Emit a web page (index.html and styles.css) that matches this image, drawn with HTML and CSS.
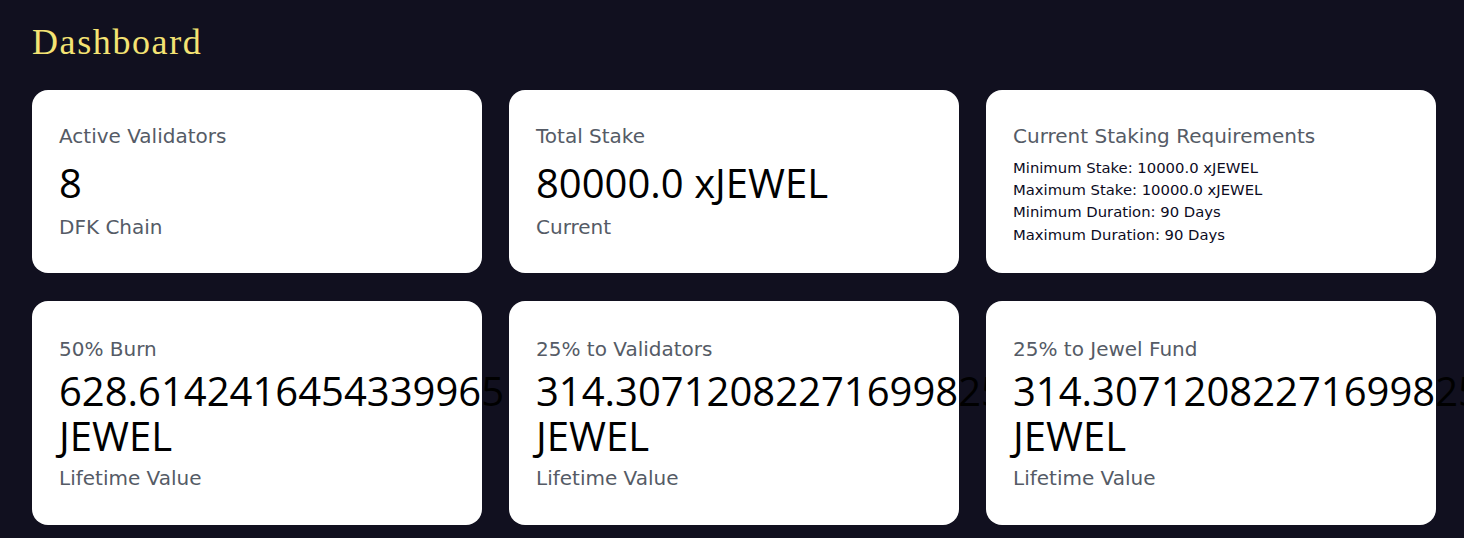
FILE: index.html
```html
<!DOCTYPE html>
<html lang="en">
<head>
<meta charset="utf-8">
<title>Dashboard</title>
<link rel="stylesheet" href="styles.css">
</head>
<body>
<main class="page">
  <h1 class="page-title">Dashboard</h1>
  <section class="grid">
    <div class="card">
      <div class="card-label">Active Validators</div>
      <div class="card-value">8</div>
      <div class="card-note">DFK Chain</div>
    </div>
    <div class="card">
      <div class="card-label">Total Stake</div>
      <div class="card-value">80000.0 xJEWEL</div>
      <div class="card-note">Current</div>
    </div>
    <div class="card">
      <div class="card-label">Current Staking Requirements</div>
      <ul class="req-list">
        <li>Minimum Stake: 10000.0 xJEWEL</li>
        <li>Maximum Stake: 10000.0 xJEWEL</li>
        <li>Minimum Duration: 90 Days</li>
        <li>Maximum Duration: 90 Days</li>
      </ul>
    </div>
    <div class="card card-tall">
      <div class="card-label">50% Burn</div>
      <div class="card-value">628.6142416454339965 JEWEL</div>
      <div class="card-note">Lifetime Value</div>
    </div>
    <div class="card card-tall">
      <div class="card-label">25% to Validators</div>
      <div class="card-value">314.30712082271699825 JEWEL</div>
      <div class="card-note">Lifetime Value</div>
    </div>
    <div class="card card-tall">
      <div class="card-label">25% to Jewel Fund</div>
      <div class="card-value">314.30712082271699825 JEWEL</div>
      <div class="card-note">Lifetime Value</div>
    </div>
  </section>
</main>
</body>
</html>
```
FILE: styles.css
```css
html, body {
  margin: 0;
  padding: 0;
  overflow: hidden;
}
body {
  background: #11101f;
  font-family: "DejaVu Sans", "Open Sans", sans-serif;
}
.page {
  padding: 22px 28px 0 32px;
}
.page-title {
  margin: 0 0 28px 0;
  height: 40px;
  font-family: "Liberation Serif", serif;
  font-weight: 400;
  font-size: 36px;
  line-height: 40px;
  letter-spacing: 1.6px;
  color: #f4e373;
}
.grid {
  display: grid;
  grid-template-columns: repeat(3, minmax(0, 1fr));
  grid-template-rows: 183px 224px;
  column-gap: 27px;
  row-gap: 28px;
}
.card {
  background: #ffffff;
  border-radius: 16px;
  padding: 31px 27px 0 27px;
  box-sizing: border-box;
  min-width: 0;
}
.card-tall {
  padding-top: 33px;
}
.card-label {
  font-size: 20px;
  line-height: 30px;
  color: #555b66;
  white-space: nowrap;
}
.card-value {
  font-family: "Open Sans", "DejaVu Sans", sans-serif;
  font-size: 40px;
  line-height: 45px;
  color: #000000;
  margin-top: 9px;
}
.card-value-wide {
  letter-spacing: 0.4px;
}
.card-tall .card-value {
  margin-top: 4px;
}
.card-note {
  font-size: 20px;
  line-height: 30px;
  color: #555b66;
  margin-top: 7px;
}
.card-tall .card-note {
  margin-top: 5px;
}
.req-list {
  list-style: none;
  margin: 5.6px 0 0 0;
  padding: 0;
  font-size: 14.8px;
  line-height: 22.4px;
  color: #0c0b1e;
}
```
